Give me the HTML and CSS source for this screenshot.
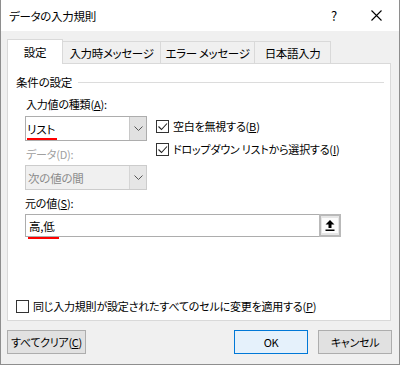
FILE: index.html
```html
<!DOCTYPE html>
<html lang="ja">
<head>
<meta charset="utf-8">
<link rel="stylesheet" href="styles.css">
</head>
<body>
<div class="window">
  <div class="titlebar">
    <span class="title">データの入力規則</span>
    <span class="help">?</span>
    <span class="close">
      <svg width="11" height="11" viewBox="0 0 11 11"><path d="M0.5 0.5 L10.5 10.5 M10.5 0.5 L0.5 10.5" stroke="#000" stroke-width="1.1" fill="none"/></svg>
    </span>
  </div>
  <div class="tabs">
    <div class="tab tab-active w1">設定</div>
    <div class="tab w2">入力時メッセージ</div>
    <div class="tab w3">エラー メッセージ</div>
    <div class="tab w4">日本語入力</div>
  </div>
  <div class="panel">
    <div class="group-head">
      <span>条件の設定</span>
      <span class="group-line"></span>
    </div>
    <div class="label l-type">入力値の種類(<u>A</u>):</div>
    <div class="row">
      <div class="leftcol">
        <div class="combo">
          <span class="combo-text"><span class="mark">リスト</span></span>
          <span class="combo-btn"><svg width="9" height="5" viewBox="0 0 9 5"><path d="M0.5 0.5 L4.5 4.5 L8.5 0.5" stroke="#555" stroke-width="1" fill="none"/></svg></span>
        </div>
        <div class="label disabled l-data">データ(D):</div>
        <div class="combo combo-disabled">
          <span class="combo-text">次の値の間</span>
          <span class="combo-btn"><svg width="9" height="5" viewBox="0 0 9 5"><path d="M0.5 0.5 L4.5 4.5 L8.5 0.5" stroke="#555" stroke-width="1" fill="none"/></svg></span>
        </div>
      </div>
      <div class="rightcol">
        <div class="check">
          <span class="box"><svg width="11" height="11" viewBox="0 0 11 11"><path d="M1.5 5.5 L4.5 8.5 L10 2.5" stroke="#222" stroke-width="1.1" fill="none"/></svg></span>
          <span>空白を無視する(<u>B</u>)</span>
        </div>
        <div class="check check2">
          <span class="box"><svg width="11" height="11" viewBox="0 0 11 11"><path d="M1.5 5.5 L4.5 8.5 L10 2.5" stroke="#222" stroke-width="1.1" fill="none"/></svg></span>
          <span>ドロップダウン&nbsp;リストから選択する(<u>I</u>)</span>
        </div>
      </div>
    </div>
    <div class="label l-src">元の値(<u>S</u>):</div>
    <div class="source">
      <span class="source-text"><span class="mark mark2">高,低</span></span>
      <span class="ref-btn">
        <span class="ref-inner">
          <svg width="10" height="11" viewBox="0 0 10 11"><path d="M5 0 L9.5 4.5 L6.5 4.5 L6.5 8 L3.5 8 L3.5 4.5 L0.5 4.5 Z" fill="#000"/><rect x="0.5" y="9.5" width="9" height="1.5" fill="#000"/></svg>
        </span>
      </span>
    </div>
    <div class="check bottom-check">
      <span class="box"></span>
      <span>同じ入力規則が設定されたすべてのセルに変更を適用する(<u>P</u>)</span>
    </div>
  </div>
  <div class="buttons">
    <button class="btn btn-clear">すべてクリア(<u>C</u>)</button>
    <span class="spacer"></span>
    <button class="btn btn-ok">OK</button>
    <button class="btn btn-cancel">キャンセル</button>
  </div>
</div>
</body>
</html>
```
FILE: styles.css
```css
* { box-sizing: border-box; }
html, body { margin: 0; padding: 0; }
body {
  font-family: "Noto Sans CJK JP", "Noto Sans", sans-serif;
  font-size: 11px;
  letter-spacing: -0.2px;
  color: #000;
  font-feature-settings: "palt";
  background: #fff;
}
u { text-decoration: underline; text-underline-offset: 1px; }

.window {
  width: 400px;
  height: 365px;
  background: #f0f0f0;
  border: 1px solid #8e8e8e;
  border-top: none;
  display: flex;
  flex-direction: column;
}

.titlebar {
  height: 31px;
  background: #fff;
  display: flex;
  align-items: center;
  padding-left: 8px;
  flex-shrink: 0;
}
.title { flex: 1; font-size: 11.5px; letter-spacing: -0.3px; }
.help { width: 20px; text-align: center; margin-right: 27px; font-size: 13px; }
.close { width: 11px; height: 11px; margin-right: 17px; display: flex; }

.tabs {
  display: flex;
  align-items: flex-end;
  margin-top: 8px;
  margin-left: 6px;
  height: 24px;
  position: relative;
  z-index: 2;
}
.tab {
  height: 22px;
  border: 1px solid #d9d9d9;
  border-bottom: none;
  background: #f0f0f0;
  display: flex;
  align-items: center;
  justify-content: center;
  margin-left: -1px;
  white-space: nowrap;
  font-size: 11.5px;
  letter-spacing: -0.35px;
}
.tab-active {
  height: 25px;
  background: #fff;
  margin-left: 0;
  margin-bottom: -1px;
  position: relative;
  z-index: 3;
}
.w1 { width: 56px; }
.w2 { width: 99px; }
.w3 { width: 95px; }
.w4 { width: 77px; }

.panel {
  margin: 0 0 0 6px;
  width: 384px;
  height: 258px;
  background: #fff;
  border: 1px solid #d9d9d9;
  position: relative;
  z-index: 1;
  padding: 10px 0 0 8px;
  flex-shrink: 0;
}

.group-head {
  display: flex;
  align-items: center;
  height: 16px;
  line-height: 16px;
  padding-right: 6px;
  font-size: 11.5px;
}
.group-line {
  flex: 1;
  height: 1px;
  background: #dcdcdc;
  margin-left: 6px;
  margin-top: 1px;
}

.label { line-height: 16px; height: 16px; margin-left: 10px; white-space: nowrap; }
.l-type { margin-top: 6px; }
.disabled { color: #a0a0a0; }

.row { display: flex; margin-top: 4px; }
.leftcol { width: 131px; margin-left: 9px; }
.rightcol { padding-top: 2px; }

.combo {
  width: 122px;
  height: 25px;
  border: 1px solid #adadad;
  background: #fff;
  display: flex;
}
.combo-text {
  flex: 1;
  display: flex;
  align-items: center;
  padding-left: 1px;
  position: relative;
  font-size: 11.5px;
}
.combo-btn {
  width: 17px;
  background: #e1e1e1;
  border-left: 1px solid #c8c8c8;
  display: flex;
  align-items: center;
  justify-content: center;
}
.combo-disabled {
  border-color: #cccccc;
  background: #f0f0f0;
  color: #8a8a8a;
}
.combo-disabled .combo-text { padding-left: 2px; }
.combo-disabled .combo-btn { background: #e6e6e6; border-left-color: #d5d5d5; }

.l-data { margin-left: 1px; margin-top: 5px; }
.leftcol .combo-disabled { margin-top: 3px; }

.mark { position: relative; }
.mark::after {
  content: "";
  position: absolute;
  left: 0;
  right: -2px;
  bottom: -3px;
  height: 2px;
  background: #ff0000;
}
.mark2::after { bottom: -5px; right: -4px; left: -1px; }

.check {
  display: flex;
  align-items: center;
  height: 16px;
  line-height: 16px;
  white-space: nowrap;
}
.check2 { margin-top: 7px; }
.box {
  width: 13px;
  height: 13px;
  border: 1px solid #333;
  background: #fff;
  margin-right: 4px;
  display: flex;
  align-items: center;
  justify-content: center;
  flex-shrink: 0;
}

.l-src { margin-top: 5px; margin-left: 9px; }

.source {
  margin-left: 9px;
  margin-top: 3px;
  width: 316px;
  height: 23px;
  border: 1px solid #adadad;
  display: flex;
  background: #fff;
}
.source-text {
  flex: 1;
  display: flex;
  align-items: center;
  padding-left: 3px;
  font-size: 11.5px;
}
.ref-btn {
  width: 22px;
  height: 23px;
  margin-top: -1px;
  margin-right: -1px;
  border: 2px solid #b9b9b9;
  background: #e6e6e6;
  display: flex;
  align-items: center;
  justify-content: center;
}
.ref-inner {
  width: 16px;
  height: 15px;
  background: #fcfcfc;
  display: flex;
  align-items: center;
  justify-content: center;
}

.bottom-check { margin-top: 61px; margin-left: 0; }
.bottom-check .box { margin-right: 4px; }

.buttons {
  display: flex;
  margin-top: 9px;
  padding-left: 6px;
  height: 24px;
}
.spacer { flex: 1; }
.btn {
  font-family: inherit;
  font-size: 11px;
  letter-spacing: -0.3px;
  font-feature-settings: "palt";
  white-space: nowrap;
  height: 24px;
  border: 1px solid #adadad;
  background: #e1e1e1;
  color: #000;
  padding: 0;
  margin: 0;
}
.btn-clear { width: 79px; }
.btn-ok {
  width: 74px;
  background: #e5f1fb;
  border-color: #0078d7;
}
.btn-cancel { width: 74px; margin-left: 10px; margin-right: 7px; }
```
